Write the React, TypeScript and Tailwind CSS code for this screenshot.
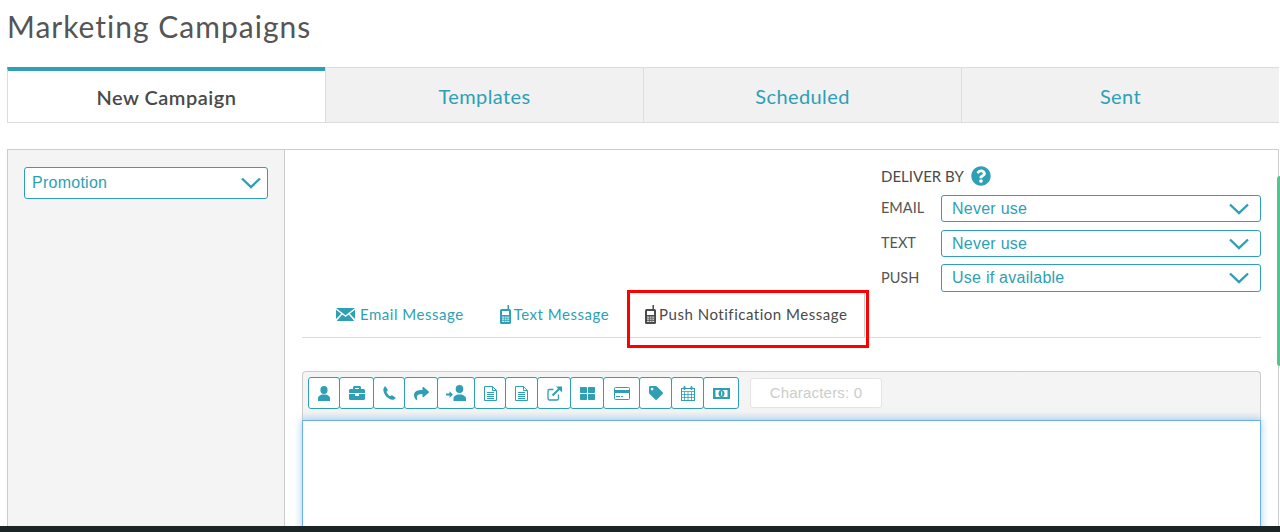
import React from 'react';
import { FaBriefcase, FaShare, FaThLarge, FaTag, FaQuestionCircle } from 'react-icons/fa';

const teal = 'text-[#2e9fb5]';

const Chevron = () => (
    <svg width="20" height="12" viewBox="0 0 20 12" fill="none" stroke="#2e9fb5" strokeWidth="2.4">
        <path d="M1 1.5 L10 10 L19 1.5" />
    </svg>
);

const PhoneIcon = ({ color }: { color: string }) => (
    <svg width="11" height="19" viewBox="0 0 11 19" fill={color}>
        <rect x="7.500" y="0" width="1.500" height="5" />
        <rect x="0" y="4" width="11" height="15" rx="1.500" />
        <rect x="2" y="6" width="7" height="4" fill="#fff" />
        <path d="M2 11.500h2v1.200H2zM4.600 11.500h2v1.200h-2zM7.200 11.500h2v1.200h-2zM2 13.600h2v1.200H2zM4.600 13.600h2v1.200h-2zM7.200 13.600h2v1.200h-2zM2 15.700h2v1.200H2zM4.600 15.700h2v1.200h-2zM7.200 15.700h2v1.200h-2z" fill="#fff" fillOpacity="0.8" />
    </svg>
);

const MailIcon = () => (
    <svg width="19" height="13" viewBox="0 0 19 13" fill="#2e9fb5">
        <path d="M0 0h19L9.500 7.200zM0 1.800V11l5.200-5.300zM19 1.800V11l-5.200-5.300zM6.300 6.600 9.500 9l3.200-2.400 5.600 6.400H.7z" />
    </svg>
);

const UserIcon = () => (
    <svg width="14" height="15" viewBox="0 0 14 15" fill="#2e9fb5">
        <ellipse cx="7" cy="4" rx="3.600" ry="4" />
        <path d="M1 15v-3c0-2 2.500-3 4-3.500h4c1.500.5 4 1.500 4 3.500v3z" />
    </svg>
);

const UserInIcon = () => (
    <svg width="21" height="16" viewBox="0 0 21 16" fill="#2e9fb5">
        <ellipse cx="13.500" cy="4" rx="3.800" ry="4" />
        <path d="M7.500 16v-3c0-2 2.500-3 4-3.500h4c1.500.5 4 1.500 4.500 3.500v3z" />
        <path d="M0 8.500h3.500V6.300L7 9.500l-3.500 3.200v-2.200H0z" />
    </svg>
);

const CallIcon = () => (
    <svg width="13" height="14" viewBox="0 0 13 14" fill="#2e9fb5">
        <path d="M2.600.5 4.700 3.700c.2.400.1.700-.2 1L3.400 5.800c.6 1.800 2 3.500 3.800 4.500l1.200-.9c.3-.2.700-.2 1 0l3 2c.3.300.3.600.1.900-.8 1-1.900 1.700-3 1.500C5 13.300 1 8.800.4 4.400.2 3 .9 1.500 1.800.6c.2-.3.600-.3.800-.1z" />
    </svg>
);

const DocIcon = () => (
    <svg width="13" height="15" viewBox="0 0 13 15" fill="none" stroke="#2e9fb5">
        <path d="M.5.500h8l4 4v10H.5zM8.500.5v4h4" />
        <path d="M3 6.500h7M3 8.500h7M3 10.500h7M3 12.500h7" />
    </svg>
);

const LinkIcon = () => (
    <svg width="15" height="15" viewBox="0 0 15 15" fill="none" stroke="#2e9fb5">
        <path d="M11.500 8.500v4a1.500 1.500 0 0 1-1.500 1.500H2.500A1.500 1.500 0 0 1 1 12.500V5a1.500 1.500 0 0 1 1.500-1.500h4" strokeWidth="1.300" />
        <path d="M5.500 9.500 13 2" strokeWidth="2" />
        <path d="M9 .5h6v6z" fill="#2e9fb5" stroke="none" />
    </svg>
);

const CardIcon = () => (
    <svg width="16" height="13" viewBox="0 0 16 13" fill="none" stroke="#2e9fb5">
        <rect x=".5" y=".5" width="15" height="12" rx="1" />
        <rect x="0" y="3" width="16" height="3" fill="#2e9fb5" stroke="none" />
        <path d="M2 9.500h4M7 9.500h2" />
    </svg>
);

const CalendarIcon = () => (
    <svg width="14" height="15" viewBox="0 0 14 15" fill="none" stroke="#2e9fb5">
        <rect x=".5" y="2.500" width="13" height="12" />
        <path d="M.5 5.500h13M.5 8.500h13M.5 11.500h13M3.500 5.500v9M7 5.500v9M10.500 5.500v9" strokeWidth="0.800" />
        <rect x="2.500" y="0" width="2" height="4" rx="1" fill="#2e9fb5" stroke="none" />
        <rect x="9.500" y="0" width="2" height="4" rx="1" fill="#2e9fb5" stroke="none" />
    </svg>
);

const BillIcon = () => (
    <svg width="17" height="11" viewBox="0 0 17 11" fill="#2e9fb5">
        <path d="M0 0h17v11H0zM2.500 2v7h12V2z" fillRule="evenodd" />
        <ellipse cx="8.500" cy="5.500" rx="3" ry="3.500" />
        <path d="M8 3.500h1.200v4H8z" fill="#fff" />
    </svg>
);

const Select = ({ value, className }: { value: string; className: string }) => (
    <div className={`flex items-center justify-between bg-white border border-[#2e9fb5] rounded-[3px] ${className}`}>
        <span className={`font-['Liberation_Sans',sans-serif] text-[16px] tracking-[0.25px] ${teal}`}>{value}</span>
        <Chevron />
    </div>
);

const tools = [
    { w: 'w-[32px]', icon: <UserIcon /> },
    { w: 'w-[35px]', icon: <FaBriefcase size={16} /> },
    { w: 'w-[32px]', icon: <CallIcon /> },
    { w: 'w-[34px]', icon: <FaShare size={15} /> },
    { w: 'w-[38px]', icon: <UserInIcon /> },
    { w: 'w-[32px]', icon: <DocIcon /> },
    { w: 'w-[33px]', icon: <DocIcon /> },
    { w: 'w-[34px]', icon: <LinkIcon /> },
    { w: 'w-[34px]', icon: <FaThLarge size={15} /> },
    { w: 'w-[37px]', icon: <CardIcon /> },
    { w: 'w-[33px]', icon: <FaTag size={14} /> },
    { w: 'w-[33px]', icon: <CalendarIcon /> },
    { w: 'w-[36px]', icon: <BillIcon /> },
];

const deliver = [
    { label: 'EMAIL', value: 'Never use', h: 'h-[27px]', extra: '' },
    { label: 'TEXT', value: 'Never use', h: 'h-[27px]', extra: '' },
    { label: 'PUSH', value: 'Use if available', h: 'h-[28px]', extra: '-mt-px' },
];

const App = () => {
    return (
        <div className="relative h-[532px] w-[1280px] overflow-hidden bg-white font-['Lato',sans-serif] text-[#4a4a4a]">
            <h1 className="pl-[7px] h-[67px] pt-[7px] text-[30px] leading-[38px] tracking-[1px] font-normal text-[#555]">Marketing Campaigns</h1>

            <div className="ml-[7px] mr-[1px] flex h-[56px] border border-[#ddd]">
                <div className="-ml-px -mt-px w-[318px] shrink-0 border-l border-t-4 border-l-[#ddd] border-t-[#2e9fb5] bg-white flex items-center justify-center text-[20px] font-semibold tracking-[0.5px] text-[#4a4a4a]">New Campaign</div>
                {['Templates', 'Scheduled', 'Sent'].map(name => (
                    <div key={name} className={`w-[318px] shrink-0 border-l border-[#ddd] bg-[#f1f1f1] pt-[1px] flex items-center justify-center text-[20px] tracking-[0.4px] ${teal}`}>{name}</div>
                ))}
            </div>

            <div className="mt-[26px] ml-[7px] mr-[1px] flex h-[400px] border border-[#ccc]">
                <div className="w-[277px] shrink-0 border-r border-[#ccc] bg-[#f4f4f4] pt-[17px] pl-[16px]">
                    <Select value="Promotion" className="w-[244px] h-[32px] pl-[7px] pr-[6px]" />
                </div>

                <div className="flex-1 pl-[17px] pr-[17px]">
                    <div className="ml-[579px] pt-[14px] h-[142px]">
                        <div className="flex items-center gap-[7px] h-[24px] text-[15px]">
                            DELIVER BY
                            <FaQuestionCircle size={20} className={teal} />
                        </div>
                        <div className="mt-[7px] flex flex-col gap-[8px]">
                            {deliver.map(row => (
                                <div key={row.label} className={`flex items-center ${row.extra}`}>
                                    <span className="w-[60px] -mt-px text-[14.5px] text-[#555]">{row.label}</span>
                                    <Select value={row.value} className={`w-[320px] ${row.h} pl-[10px] pr-[11px]`} />
                                </div>
                            ))}
                        </div>
                    </div>

                    <div className="relative flex h-[46px] border-b border-[#ddd] text-[15px] tracking-[0.52px]">
                        <div className={`ml-[34px] flex items-center gap-[5px] ${teal}`}>
                            <MailIcon />
                            Email Message
                        </div>
                        <div className={`ml-[36px] flex items-center gap-[3px] ${teal}`}>
                            <PhoneIcon color="#2e9fb5" />
                            Text Message
                        </div>
                        <div className="ml-[36px] flex items-center gap-[3px] pr-[17px] border-r border-[#ccc] text-[#4a4a4a]">
                            <PhoneIcon color="#4a4a4a" />
                            Push Notification Message
                        </div>
                        <div className="absolute left-[325px] top-[-2px] h-[58px] w-[242px] border-[3px] border-[#f00]" />
                    </div>

                    <div className="mt-[33px] flex h-[49px] gap-[11px] rounded-t-[4px] border border-b-0 border-[#ccc] bg-gradient-to-b from-[#f4f4f4] from-80% to-[#e6ebef] pl-[5px] pt-[5px]">
                        <div className="flex h-[32px]">
                            {tools.map((tool, i) => (
                                <div key={i} className={`${tool.w} -mr-px flex items-center justify-center rounded-[3px] border border-[#2e9fb5] bg-white ${teal}`}>{tool.icon}</div>
                            ))}
                        </div>
                        <div className="ml-[1px] mt-[1px] flex h-[30px] w-[132px] items-center justify-center rounded-[3px] border border-[#e4e4e4] bg-white font-['Liberation_Sans',sans-serif] text-[15px] tracking-[0.2px] text-[#ccc]">Characters: 0</div>
                    </div>
                    <div className="h-[140px] border border-[#66afe9] bg-white shadow-[0_0_8px_rgba(102,175,233,0.6)]" />
                </div>
            </div>

            <div className="absolute right-0 top-[176px] h-[190px] w-[3px] rounded-l-[3px] bg-[#52c48c]" />
            <div className="absolute bottom-0 left-0 h-[6px] w-full bg-[#1b2526]" />
        </div>
    );
};

export default App;
